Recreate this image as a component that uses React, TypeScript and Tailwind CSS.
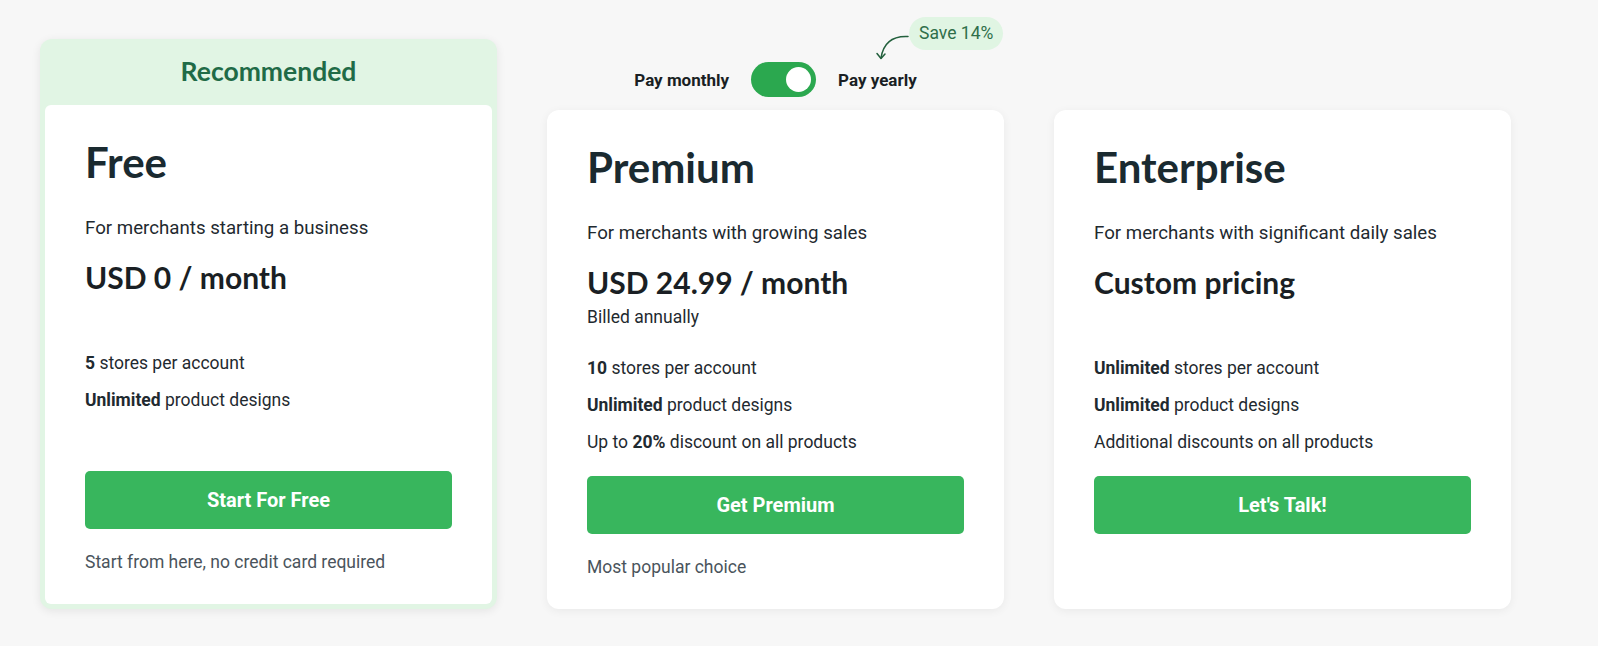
import React from "react"

type Plan = {
  name: string
  desc: string
  price: string
  billed?: string
  features: React.ReactNode[]
  cta: string
  note?: string
}

const plans: Plan[] = [
  {
    name: "Free",
    desc: "For merchants starting a business",
    price: "USD 0 / month",
    features: [
      <><b className="font-bold">5</b> stores per account</>,
      <><b className="font-bold">Unlimited</b> product designs</>,
    ],
    cta: "Start For Free",
    note: "Start from here, no credit card required",
  },
  {
    name: "Premium",
    desc: "For merchants with growing sales",
    price: "USD 24.99 / month",
    billed: "Billed annually",
    features: [
      <><b className="font-bold">10</b> stores per account</>,
      <><b className="font-bold">Unlimited</b> product designs</>,
      <>Up to <b className="font-bold">20%</b> discount on all products</>,
    ],
    cta: "Get Premium",
    note: "Most popular choice",
  },
  {
    name: "Enterprise",
    desc: "For merchants with significant daily sales",
    price: "Custom pricing",
    features: [
      <><b className="font-bold">Unlimited</b> stores per account</>,
      <><b className="font-bold">Unlimited</b> product designs</>,
      <>Additional discounts on all products</>,
    ],
    cta: "Let's Talk!",
  },
]

function PlanBody({ plan }: { plan: Plan }) {
  return (
    <div className="flex flex-col px-10 pt-8 pb-[30px]">
      <h2 className="font-[Lato,sans-serif] text-[42px] leading-[50px] font-bold text-[#1a2a30]">
        {plan.name}
      </h2>
      <p className="mt-[29px] text-[18.7px] leading-6 text-[#1f2a30]">{plan.desc}</p>
      <div className="mt-[19px] h-[92px]">
        <p className="font-[Lato,sans-serif] text-[30px] leading-9 font-bold text-[#1a1f24]">
          {plan.price}
        </p>
        {plan.billed && (
          <p className="mt-[5px] text-[17.5px] leading-6 text-[#1f2a30]">{plan.billed}</p>
        )}
      </div>
      <ul className="flex min-h-[98px] flex-col gap-[13px] text-[17.5px] leading-6 text-[#1f2a30]">
        {plan.features.map((f, i) => (
          <li key={i}>{f}</li>
        ))}
      </ul>
      <button className="mt-[22px] h-[58px] w-full rounded-[5px] bg-[#38b65d] text-[20px] font-bold text-white">
        {plan.cta}
      </button>
      <p className="mt-[21px] h-6 text-[17.5px] leading-6 text-[#4a545c]">{plan.note}</p>
    </div>
  )
}

function BillingToggle() {
  return (
    <div className="mb-[13px] flex h-[35px] items-center justify-center gap-[22px] text-[17px] font-bold text-[#1a1f24]">
      <span className="leading-6">Pay monthly</span>
      <button className="flex h-[35px] w-[65px] items-center justify-end rounded-full bg-[#2ba84f] pr-[5px]">
        <span className="h-[25px] w-[25px] rounded-full bg-white" />
      </button>
      <span className="relative leading-6">
        Pay yearly
        <svg
          className="absolute left-[36px] top-[-36px]"
          width="40"
          height="30"
          viewBox="0 0 40 30"
          fill="none"
          stroke="#23603d"
          strokeWidth="1.5"
          strokeLinecap="round"
          strokeLinejoin="round"
        >
          <path d="M34 4.5C24 4 10 6 7 26" />
          <path d="M3 21.5L7 26.5L11 22" />
        </svg>
        <span className="absolute left-[71px] top-[-51px] flex h-[33px] items-center whitespace-nowrap rounded-full bg-[#e0f5e3] px-[10px] text-[17.5px] font-normal text-[#2f6f4a]">
          Save 14%
        </span>
      </span>
    </div>
  )
}

export default function App() {
  return (
    <div className="min-h-[646px] bg-[#f7f7f7] font-[Roboto,sans-serif]">
      <div className="flex items-end gap-[50px] pl-10 pt-[39px]">
        <div className="w-[457px] rounded-xl bg-[#e1f5e4] px-[5px] pb-[5px] shadow-[0_2px_10px_rgba(0,0,0,0.08)]">
          <div className="flex h-[66px] items-center justify-center font-[Lato,sans-serif] text-[26.5px] font-bold text-[#1f6b47]">
            Recommended
          </div>
          <div className="rounded-md bg-white">
            <PlanBody plan={plans[0]} />
          </div>
        </div>

        <div className="flex w-[457px] flex-col">
          <BillingToggle />
          <div className="rounded-xl bg-white shadow-[0_2px_10px_rgba(0,0,0,0.06)]">
            <PlanBody plan={plans[1]} />
          </div>
        </div>

        <div className="w-[457px] rounded-xl bg-white shadow-[0_2px_10px_rgba(0,0,0,0.06)]">
          <PlanBody plan={plans[2]} />
        </div>
      </div>
    </div>
  )
}
